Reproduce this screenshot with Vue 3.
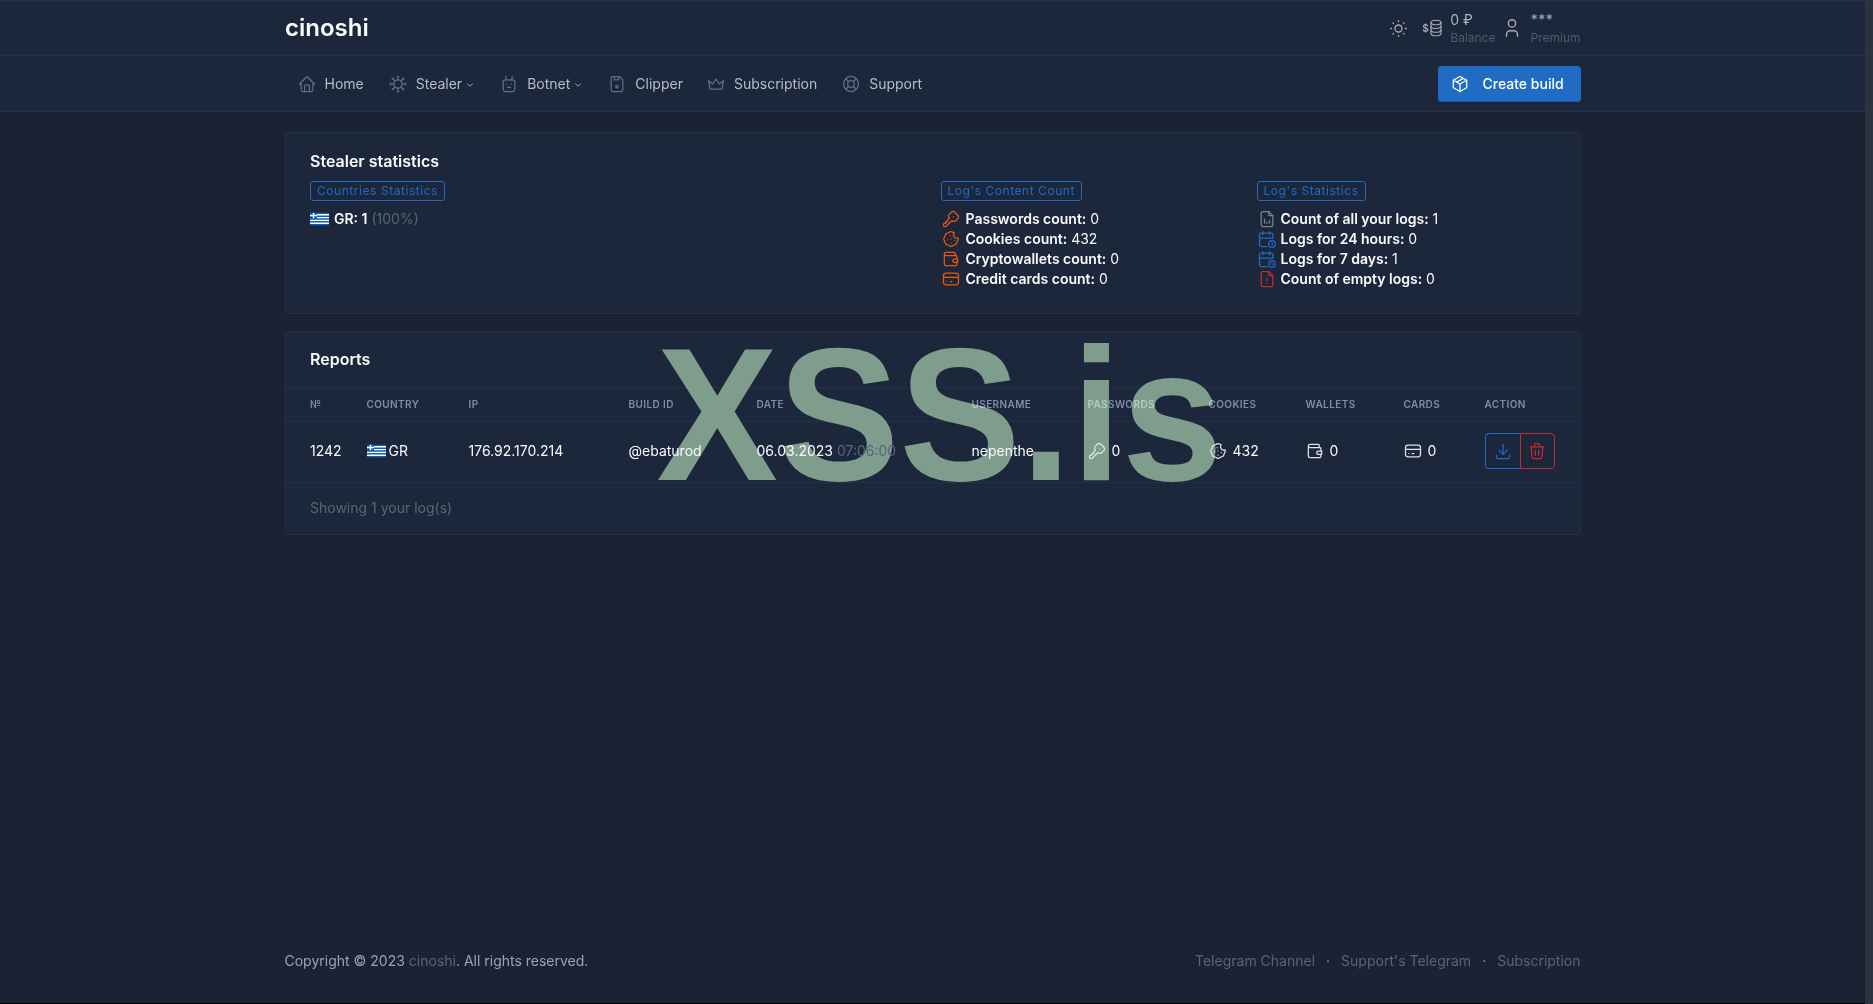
<script setup>
const navItems = [
  { label: 'Home', icon: 'home' },
  { label: 'Stealer', icon: 'virus', caret: true },
  { label: 'Botnet', icon: 'robot', caret: true },
  { label: 'Clipper', icon: 'floppy' },
  { label: 'Subscription', icon: 'crown' },
  { label: 'Support', icon: 'buoy' },
]
const paths = {
  home: ['M5 12l-2 0l9 -9l9 9l-2 0', 'M5 12v7a2 2 0 0 0 2 2h10a2 2 0 0 0 2 -2v-7', 'M9 21v-6a2 2 0 0 1 2 -2h2a2 2 0 0 1 2 2v6'],
  virus: ['M7 12a5 5 0 1 0 10 0a5 5 0 1 0 -10 0', 'M12 7v-4', 'M11 3h2', 'M15.536 8.464l2.828 -2.828', 'M17.657 4.929l1.414 1.414', 'M17 12h4', 'M21 11v2', 'M15.535 15.536l2.829 2.828', 'M19.071 17.657l-1.414 1.414', 'M12 17v4', 'M13 21h-2', 'M8.465 15.536l-2.829 2.828', 'M6.343 19.071l-1.413 -1.414', 'M7 12h-4', 'M3 13v-2', 'M8.464 8.464l-2.828 -2.828', 'M4.929 6.343l1.414 -1.413'],
  robot: ['M8 7h8a3 3 0 0 1 3 3v8a3 3 0 0 1 -3 3h-8a3 3 0 0 1 -3 -3v-8a3 3 0 0 1 3 -3', 'M10 16h4', 'M9 12h.01', 'M15 12h.01', 'M9 7l-1 -4', 'M15 7l1 -4'],
  floppy: ['M7 3h8l4 4v12a2 2 0 0 1 -2 2h-10a2 2 0 0 1 -2 -2v-14a2 2 0 0 1 2 -2', 'M9 3v4h5v-4', 'M12 15m-1.5 0a1.5 1.5 0 1 0 3 0a1.5 1.5 0 1 0 -3 0'],
  crown: ['M12 6l4 6l5 -4l-2 10h-14l-2 -10l5 4z'],
  buoy: ['M8 12a4 4 0 1 0 8 0a4 4 0 1 0 -8 0', 'M3 12a9 9 0 1 0 18 0a9 9 0 1 0 -18 0', 'M15 15l3.35 3.35', 'M9 15l-3.35 3.35', 'M5.65 5.65l3.35 3.35', 'M18.35 5.65l-3.35 3.35'],
  sun: ['M8 12a4 4 0 1 0 8 0a4 4 0 1 0 -8 0', 'M3 12h1m8 -9v1m8 8h1m-9 8v1m-6.4 -15.4l.7 .7m12.1 -.7l-.7 .7m0 11.4l.7 .7m-12.1 -.7l-.7 .7'],
  db: ['M1 3.5a5 2.3 0 1 0 10 0a5 2.3 0 1 0 -10 0', 'M1 3.5v11c0 1.3 2.2 2.3 5 2.3s5 -1 5 -2.3v-11', 'M1 7.2c0 1.3 2.2 2.3 5 2.3s5 -1 5 -2.3', 'M1 11c0 1.3 2.2 2.3 5 2.3s5 -1 5 -2.3'],
  user: ['M8 7a4 4 0 1 0 8 0a4 4 0 0 0 -8 0', 'M6 21v-2a4 4 0 0 1 4 -4h4a4 4 0 0 1 4 4v2'],
  box: ['M12 3l8 4.5l0 9l-8 4.5l-8 -4.5l0 -9l8 -4.5', 'M12 12l8 -4.5', 'M12 12l0 9', 'M12 12l-8 -4.5', 'M16 5.25l-8 4.5'],
  key: ['M16.555 3.843l3.602 3.602a2.877 2.877 0 0 1 0 4.069l-2.643 2.643a2.877 2.877 0 0 1 -4.069 0l-.301 -.301l-6.558 6.558a2 2 0 0 1 -1.239 .578l-.175 .008h-1.172a1 1 0 0 1 -.993 -.883l-.007 -.117v-1.172a2 2 0 0 1 .467 -1.284l.119 -.143l.414 -.414h2v-2h2v-2l2.144 -2.144l-.301 -.301a2.877 2.877 0 0 1 0 -4.069l2.643 -2.643a2.877 2.877 0 0 1 4.069 0z', 'M15 9h.01'],
  cookie: ['M8 13v.01', 'M12 17v.01', 'M12 12v.01', 'M16 14v.01', 'M11 8v.01', 'M13.148 3.476l2.667 1.104a4 4 0 0 0 4.656 6.14l.053 .132a3 3 0 0 1 0 2.296c-.497 .786 -.838 1.404 -1.024 1.852c-.189 .456 -.409 1.194 -.66 2.216a3 3 0 0 1 -1.624 1.623c-1.048 .263 -1.787 .483 -2.216 .661c-.475 .197 -1.092 .538 -1.852 1.024a3 3 0 0 1 -2.296 0c-.802 -.503 -1.419 -.844 -1.852 -1.024c-.471 -.195 -1.21 -.415 -2.216 -.66a3 3 0 0 1 -1.623 -1.624c-.265 -1.052 -.485 -1.79 -.661 -2.216c-.198 -.479 -.54 -1.096 -1.024 -1.852a3 3 0 0 1 0 -2.296c.48 -.744 .82 -1.361 1.024 -1.852c.171 -.413 .391 -1.152 .66 -2.216a3 3 0 0 1 1.624 -1.623c1.032 -.256 1.77 -.476 2.216 -.661c.458 -.19 1.075 -.531 1.852 -1.024a3 3 0 0 1 2.296 0z'],
  wallet: ['M17 8v-3a1 1 0 0 0 -1 -1h-10a2 2 0 0 0 0 4h12a1 1 0 0 1 1 1v3m0 4v3a1 1 0 0 1 -1 1h-12a2 2 0 0 1 -2 -2v-12', 'M20 12v4h-4a2 2 0 0 1 0 -4h4'],
  card: ['M3 8a3 3 0 0 1 3 -3h12a3 3 0 0 1 3 3v8a3 3 0 0 1 -3 3h-12a3 3 0 0 1 -3 -3z', 'M3 10l18 0', 'M7 15l.01 0', 'M11 15l2 0'],
  fileChart: ['M14 3v4a1 1 0 0 0 1 1h4', 'M17 21h-10a2 2 0 0 1 -2 -2v-14a2 2 0 0 1 2 -2h7l5 5v11a2 2 0 0 1 -2 2z', 'M9 17l0 -5', 'M12 17l0 -1', 'M15 17l0 -3'],
  calTime: ['M11.795 21h-6.795a2 2 0 0 1 -2 -2v-12a2 2 0 0 1 2 -2h12a2 2 0 0 1 2 2v4', 'M14 18a4 4 0 1 0 8 0a4 4 0 1 0 -8 0', 'M15 3v4', 'M7 3v4', 'M3 11h16', 'M18 16.496v1.504l1 1'],
  fileAlert: ['M14 3v4a1 1 0 0 0 1 1h4', 'M17 21h-10a2 2 0 0 1 -2 -2v-14a2 2 0 0 1 2 -2h7l5 5v11a2 2 0 0 1 -2 2z', 'M12 17l.01 0', 'M12 11l0 3'],
  download: ['M4 17v2a2 2 0 0 0 2 2h12a2 2 0 0 0 2 -2v-2', 'M7 11l5 5l5 -5', 'M12 4l0 12'],
  trash: ['M4 7l16 0', 'M10 11l0 6', 'M14 11l0 6', 'M5 7l1 12a2 2 0 0 0 2 2h8a2 2 0 0 0 2 -2l1 -12', 'M9 7v-3a1 1 0 0 1 1 -1h4a1 1 0 0 1 1 1v3'],
  chevron: ['M6 9l6 6l6 -6'],
}
const contentStats = [
  { icon: 'key', label: 'Passwords count:', value: '0' },
  { icon: 'cookie', label: 'Cookies count:', value: '432' },
  { icon: 'wallet', label: 'Cryptowallets count:', value: '0' },
  { icon: 'card', label: 'Credit cards count:', value: '0' },
]
const logStats = [
  { icon: 'fileChart', tone: 'grey', label: 'Count of all your logs:', value: '1' },
  { icon: 'calTime', tone: 'blue', label: 'Logs for 24 hours:', value: '0' },
  { icon: 'calTime', tone: 'blue', label: 'Logs for 7 days:', value: '1' },
  { icon: 'fileAlert', tone: 'red', label: 'Count of empty logs:', value: '0' },
]
const columns = [
  ['№', 81], ['Country', 102], ['IP', 160], ['Build ID', 128], ['Date', 215], ['Username', 116],
  ['Passwords', 121], ['Cookies', 97], ['Wallets', 98], ['Cards', 81], ['Action', 95],
]
const counts = [
  { icon: 'key', value: '0' },
  { icon: 'cookie', value: '432' },
  { icon: 'wallet', value: '0' },
  { icon: 'card', value: '0' },
]
</script>

<template>
  <div class="screen">
    <div class="page">
      <header class="topbar">
        <div class="wrap topbar-in">
          <span class="logo">cinoshi</span>
          <div class="tools">
            <svg class="ico tool-sun" viewBox="0 0 24 24"><path v-for="d in paths.sun" :key="d" :d="d" /></svg>
            <div class="balance">
              <span class="dollar">$</span>
              <svg class="ico db" viewBox="0 0 12 18"><path v-for="d in paths.db" :key="d" :d="d" /></svg>
              <div class="stack">
                <span class="stack-main">0 ₽</span>
                <span class="stack-sub">Balance</span>
              </div>
            </div>
            <div class="account">
              <svg class="ico tool-user" viewBox="0 0 24 24"><path v-for="d in paths.user" :key="d" :d="d" /></svg>
              <div class="stack">
                <span class="stack-main stars">***</span>
                <span class="stack-sub">Premium</span>
              </div>
            </div>
          </div>
        </div>
      </header>

      <nav class="navbar">
        <div class="wrap navbar-in">
          <ul class="nav">
            <li v-for="item in navItems" :key="item.label" class="nav-link">
              <svg class="ico nav-ico" viewBox="0 0 24 24"><path v-for="d in paths[item.icon]" :key="d" :d="d" /></svg>
              <span>{{ item.label }}</span>
              <svg v-if="item.caret" class="ico caret" viewBox="0 0 24 24"><path :d="paths.chevron[0]" /></svg>
            </li>
          </ul>
          <button class="build-btn" type="button">
            <svg class="ico btn-ico" viewBox="0 0 24 24"><path v-for="d in paths.box" :key="d" :d="d" /></svg>
            Create build
          </button>
        </div>
      </nav>

      <main class="wrap content">
        <section class="card stats-card">
          <h3 class="card-title">Stealer statistics</h3>
          <div class="stats-grid">
            <div>
              <span class="badge">Countries Statistics</span>
              <div class="stat-list">
                <div class="stat-row">
                  <svg class="flag" viewBox="0 0 27 18"><rect width="27" height="18" fill="#0d5eaf" /><path d="M10 3h17M10 7h17M0 11h27M0 15h27" stroke="#fff" stroke-width="2" /><path d="M0 4h10M5 0v8" stroke="#fff" stroke-width="2" /></svg>
                  <b>GR: 1</b>&nbsp;<span class="muted">(100%)</span>
                </div>
              </div>
            </div>
            <div>
              <span class="badge">Log's Content Count</span>
              <div class="stat-list">
                <div v-for="s in contentStats" :key="s.label" class="stat-row">
                  <svg class="ico stat-ico orange" viewBox="0 0 24 24"><path v-for="d in paths[s.icon]" :key="d" :d="d" /></svg>
                  <b>{{ s.label }}</b>&nbsp;{{ s.value }}
                </div>
              </div>
            </div>
            <div>
              <span class="badge">Log's Statistics</span>
              <div class="stat-list">
                <div v-for="s in logStats" :key="s.label" class="stat-row">
                  <svg class="ico stat-ico" :class="s.tone" viewBox="0 0 24 24"><path v-for="d in paths[s.icon]" :key="d" :d="d" /></svg>
                  <b>{{ s.label }}</b>&nbsp;{{ s.value }}
                </div>
              </div>
            </div>
          </div>
        </section>

        <section class="card reports-card">
          <div class="watermark">XSS.is</div>
          <h3 class="card-title reports-title"><span class="lift">Reports</span></h3>
          <table class="table">
            <colgroup>
              <col v-for="c in columns" :key="c[0]" :style="{ width: c[1] + 'px' }" />
            </colgroup>
            <thead>
              <tr>
                <th v-for="c in columns" :key="c[0]"><span class="lift th-text">{{ c[0] }}</span></th>
              </tr>
            </thead>
            <tbody>
              <tr>
                <td><span class="lift">1242</span></td>
                <td>
                  <span class="lift cell-flex flag-cell">
                    <svg class="flag" viewBox="0 0 27 18"><rect width="27" height="18" fill="#0d5eaf" /><path d="M10 3h17M10 7h17M0 11h27M0 15h27" stroke="#fff" stroke-width="2" /><path d="M0 4h10M5 0v8" stroke="#fff" stroke-width="2" /></svg>
                    GR
                  </span>
                </td>
                <td><span class="lift">176.92.170.214</span></td>
                <td><span class="lift">@ebaturod</span></td>
                <td><span class="lift">06.03.2023 <span class="muted">07:06:00</span></span></td>
                <td><span class="lift">nepenthe</span></td>
                <td v-for="c in counts" :key="c.icon">
                  <span class="lift cell-flex count-cell">
                    <svg class="ico count-ico" viewBox="0 0 24 24"><path v-for="d in paths[c.icon]" :key="d" :d="d" /></svg>
                    {{ c.value }}
                  </span>
                </td>
                <td>
                  <span class="lift actions">
                    <button class="act act-blue" type="button" aria-label="Download">
                      <svg class="ico act-ico" viewBox="0 0 24 24"><path v-for="d in paths.download" :key="d" :d="d" /></svg>
                    </button>
                    <button class="act act-red" type="button" aria-label="Delete">
                      <svg class="ico act-ico" viewBox="0 0 24 24"><path v-for="d in paths.trash" :key="d" :d="d" /></svg>
                    </button>
                  </span>
                </td>
              </tr>
            </tbody>
          </table>
          <div class="card-foot">Showing 1 your log(s)</div>
        </section>
      </main>

      <footer class="wrap footer">
        <div class="copy">Copyright © 2023 <span class="dim">cinoshi</span>. All rights reserved.</div>
        <div class="links">
          <span>Telegram Channel</span>
          <i>·</i>
          <span>Support's Telegram</span>
          <i>·</i>
          <span>Subscription</span>
        </div>
      </footer>
    </div>
    <div class="scrollbar"></div>
  </div>
</template>

<style scoped>
.screen {
  display: flex;
  width: 1873px;
  height: 1004px;
  overflow: hidden;
  background: #000;
  font-family: Inter, "Liberation Sans", sans-serif;
  font-size: 14px;
  line-height: 20px;
  color: #f8fafc;
}
.page {
  flex: 1;
  height: 1003px;
  display: flex;
  flex-direction: column;
  background: #1a2234;
}
.scrollbar {
  width: 8px;
  height: 1004px;
  background: #2b3240;
}
.wrap {
  width: 1296px;
  margin: 0 auto;
}
.ico {
  fill: none;
  stroke: currentColor;
  stroke-width: 1.5;
  stroke-linecap: round;
  stroke-linejoin: round;
  flex: none;
  display: block;
}
.topbar {
  height: 56px;
  box-sizing: border-box;
  background: #1d273b;
  border-top: 1px solid #243049;
  border-bottom: 1px solid #243049;
}
.topbar-in {
  height: 54px;
  display: flex;
  align-items: center;
  justify-content: space-between;
}
.logo {
  font-size: 24px;
  font-weight: 600;
  line-height: 54px;
  color: #f8fafc;
  padding-left: 0.5px;
}
.tools {
  display: flex;
  align-items: center;
  color: #a7adb5;
}
.tool-sun {
  width: 21px;
  height: 21px;
  margin-right: 13px;
}
.balance,
.account {
  display: flex;
  align-items: center;
}
.dollar {
  font-size: 10px;
  font-weight: 600;
  width: 8px;
}
.db {
  width: 12px;
  height: 18px;
  margin-right: 8px;
  stroke-width: 1.1;
}
.stack {
  display: flex;
  flex-direction: column;
}
.stack-main {
  line-height: 18px;
  color: #a9b3c1;
}
.stars {
  color: #8aa0bb;
  font-weight: 600;
}
.stack-sub {
  font-size: 12px;
  line-height: 17px;
  color: #505b6d;
}
.account {
  margin-left: 6px;
}
.tool-user {
  width: 22px;
  height: 22px;
  margin-right: 7px;
}
.navbar {
  height: 56px;
  box-sizing: border-box;
  background: #1d273b;
  border-bottom: 1px solid #243049;
}
.navbar-in {
  height: 55px;
  display: flex;
  align-items: center;
  justify-content: space-between;
}
.nav {
  display: flex;
  list-style: none;
  margin: 0;
  padding: 0;
}
.nav-link {
  display: flex;
  align-items: center;
  padding: 0 12px;
  color: #b4bcc8;
}
.nav-link:nth-child(4) {
  padding-right: 11px;
}
.nav-ico {
  width: 20px;
  height: 20px;
  margin-right: 8px;
  color: #5f6e80;
}
.caret {
  width: 10px;
  height: 10px;
  margin-left: 3px;
  margin-top: 2px;
  stroke-width: 2;
}
.build-btn {
  width: 143px;
  height: 36px;
  display: flex;
  align-items: center;
  gap: 13px;
  padding: 0 0 0 12px;
  border: 0;
  box-shadow: inset 0 -1px 0 #1b5aa6;
  border-radius: 4px;
  background: #206bc4;
  color: #fff;
  font: 500 14px/20px Inter, "Liberation Sans", sans-serif;
}
.btn-ico {
  width: 20px;
  height: 20px;
}
.content {
  flex: 1;
  padding-top: 20px;
}
.card {
  position: relative;
  background: #1d273b;
  border: 1px solid #243049;
  border-radius: 4px;
  box-sizing: border-box;
}
.stats-card {
  height: 182px;
  padding: 18px 24px 0 24.5px;
  margin-bottom: 17px;
}
.card-title {
  margin: 0;
  font-size: 16px;
  line-height: 21px;
  font-weight: 600;
}
.stats-grid {
  display: grid;
  grid-template-columns: 630.5px 316px 1fr;
  margin-top: 9px;
}
.badge {
  display: inline-block;
  height: 20px;
  box-sizing: border-box;
  padding: 0 6px;
  border: 1px solid #206bc4;
  border-radius: 3px;
  color: #206bc4;
  font-size: 12px;
  line-height: 18px;
  letter-spacing: 0.55px;
  font-weight: 400;
  vertical-align: top;
}
.stat-list {
  margin-top: 8px;
}
.stat-row {
  display: flex;
  align-items: center;
  height: 20px;
  white-space: pre;
}
.stat-row b {
  font-weight: 600;
}
.stat-ico {
  width: 20px;
  height: 20px;
  margin-right: 4px;
}
.orange { color: #e8590c; margin-right: 5px; }
.grey { color: #74877e; }
.blue { color: #206bc4; }
.red { color: #c92a2a; }
.flag {
  width: 19px;
  height: 14px;
  border-radius: 2px;
  margin-right: 5px;
  flex: none;
}
.muted {
  color: #5a6574;
}
.reports-card {
  height: 204px;
}
.reports-title {
  height: 56px;
  box-sizing: border-box;
  padding: 17px 24.5px 0;
  border-bottom: 1px solid #243049;
}
.watermark {
  position: absolute;
  z-index: 1;
  left: 371px;
  top: -12px;
  font-family: "Liberation Sans", Arial, sans-serif;
  font-weight: 700;
  font-size: 182px;
  line-height: 182px;
  color: #7f9d8d;
  white-space: nowrap;
  pointer-events: none;
  transform: scaleY(1.04);
  transform-origin: top left;
}
.lift {
  position: relative;
  z-index: 2;
}
.table {
  width: 1294px;
  table-layout: fixed;
  border-collapse: collapse;
}
th {
  height: 33px;
  padding: 0;
  box-sizing: border-box;
  text-align: left;
  font-size: 10px;
  font-weight: 600;
  line-height: 14px;
  letter-spacing: 0.4px;
  text-transform: uppercase;
  border-bottom: 1px solid #243049;
}
.th-text {
  color: #6e7a8c;
  mix-blend-mode: screen;
}
td {
  height: 61px;
  padding: 0 0 2px;
  box-sizing: border-box;
  border-bottom: 1px solid #243049;
  color: #f8fafc;
  white-space: nowrap;
}
th:first-child,
td:first-child {
  padding-left: 24.5px;
}
.cell-flex {
  display: flex;
  align-items: center;
}
.flag-cell .flag {
  margin-right: 3px;
}
.count-cell {
  margin-left: -1px;
}
.count-ico {
  width: 20px;
  height: 20px;
  margin-right: 5px;
  color: #dfe3e8;
}
.actions {
  display: inline-flex;
  vertical-align: middle;
}
.act {
  width: 35px;
  height: 36px;
  padding: 0;
  display: flex;
  align-items: center;
  justify-content: center;
  background: transparent;
  box-sizing: border-box;
}
.act-blue {
  border: 1px solid #206bc4;
  border-right: 0;
  border-radius: 4px 0 0 4px;
  color: #206bc4;
}
.act-red {
  border: 1px solid #c02c2f;
  border-radius: 0 4px 4px 0;
  color: #c02c2f;
}
.act-ico {
  width: 20px;
  height: 20px;
}
.card-foot {
  padding: 15px 24.5px 0;
  color: #5a6574;
}
.footer {
  display: flex;
  justify-content: space-between;
  height: 52px;
  color: #9aa4b2;
}
.dim {
  color: #5a6574;
}
.links {
  display: flex;
  gap: 11px;
  color: #5a6574;
}
.links i {
  font-style: normal;
  color: #8a94a6;
}
</style>

<style>
html, body {
  margin: 0;
  background: #000;
}
</style>
